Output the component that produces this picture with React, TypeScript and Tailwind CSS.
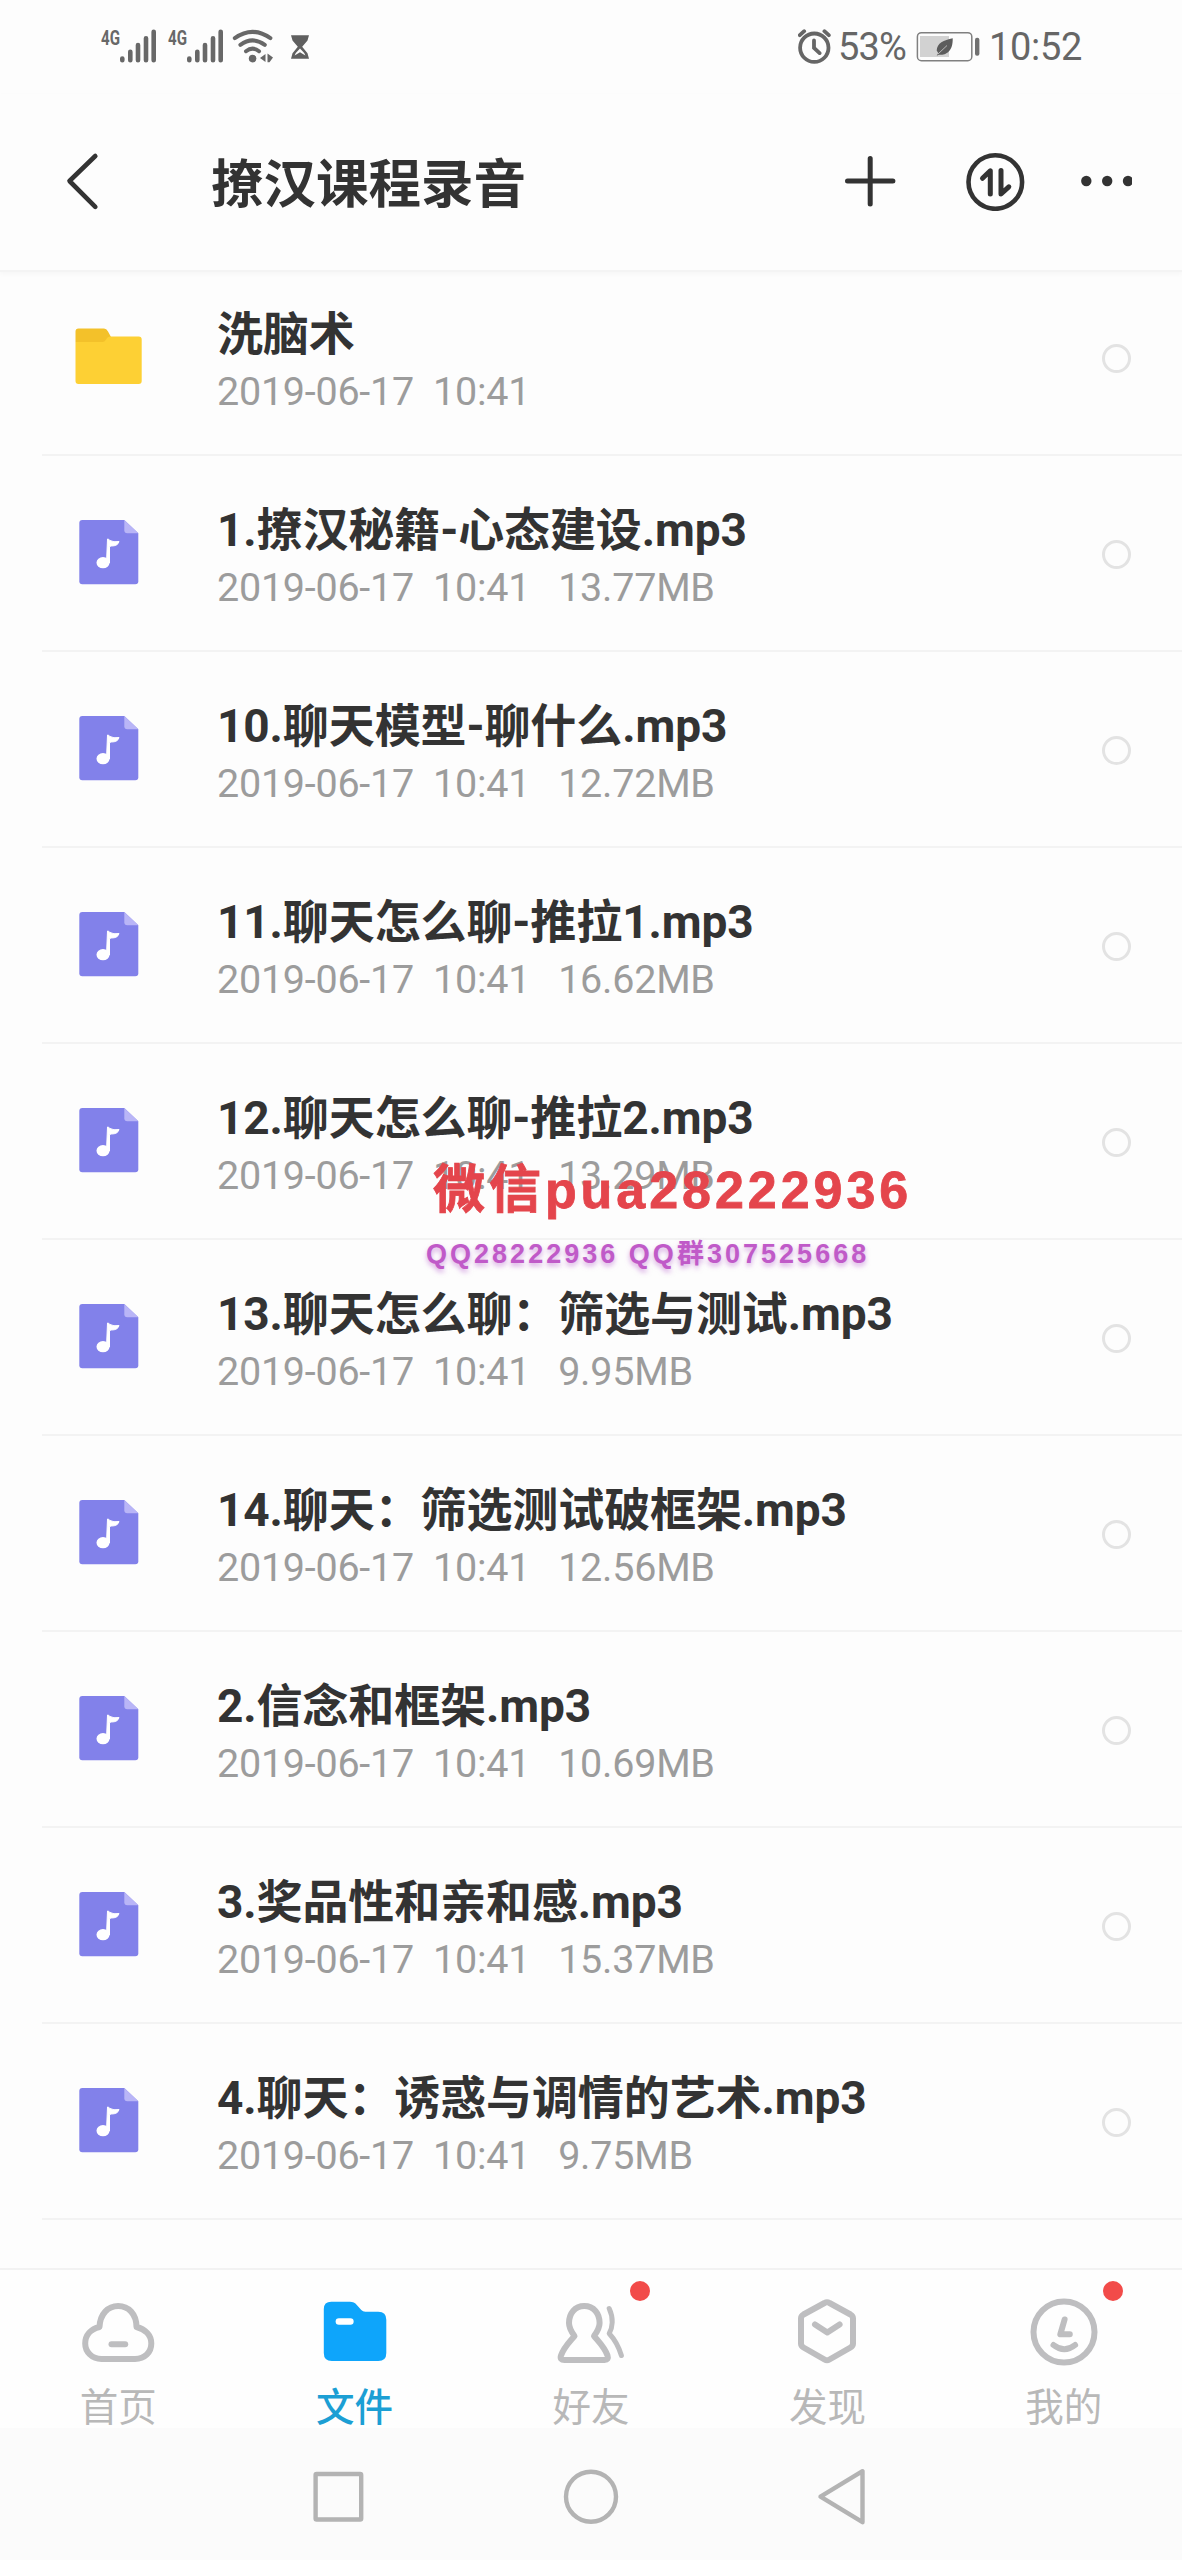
import { ReactNode } from 'react'

interface FileItem {
  name: string
  size?: string
  folder?: boolean
}

const files: FileItem[] = [
  { name: '洗脑术', folder: true },
  { name: '1.撩汉秘籍-心态建设.mp3', size: '13.77MB' },
  { name: '10.聊天模型-聊什么.mp3', size: '12.72MB' },
  { name: '11.聊天怎么聊-推拉1.mp3', size: '16.62MB' },
  { name: '12.聊天怎么聊-推拉2.mp3', size: '13.29MB' },
  { name: '13.聊天怎么聊：筛选与测试.mp3', size: '9.95MB' },
  { name: '14.聊天：筛选测试破框架.mp3', size: '12.56MB' },
  { name: '2.信念和框架.mp3', size: '10.69MB' },
  { name: '3.奖品性和亲和感.mp3', size: '15.37MB' },
  { name: '4.聊天：诱惑与调情的艺术.mp3', size: '9.75MB' },
]

function SignalBars() {
  return (
    <svg className="-mt-2" width="58" height="44" viewBox="99 20 58 44" fill="none" stroke="#686868" strokeWidth="4.6" strokeLinecap="round">
      <text x="101" y="44.5" fontSize="20.5" fontWeight="700" fontFamily="Roboto, sans-serif" fill="#686868" stroke="none" textLength="19" lengthAdjust="spacingAndGlyphs">
        4G
      </text>
      <path d="M122.3 58.6v1.6M130.3 51.8v8.4M138 45v15.2M146 38.2v22M153.7 31.8v28.4" />
    </svg>
  )
}

function StatusBar() {
  return (
    <div className="flex h-[94px] items-start justify-between pl-[99px] pr-[100px] pt-7 font-[Roboto,sans-serif] text-[38px] leading-9 text-[#666]">
      <div className="flex items-start">
        <SignalBars />
        <div className="ml-[9px] flex">
          <SignalBars />
        </div>
        <svg className="ml-2" width="78" height="36" viewBox="232 28 78 36" fill="none" stroke="#686868" strokeWidth="4" strokeLinecap="round">
          <path d="M234.8 38.2Q252.6 25.5 270.4 38.2" />
          <path d="M240.4 44.8Q252.6 36 264.8 44.8" />
          <path d="M246 51.2Q252.6 46 259 51.2" />
          <circle cx="252.6" cy="58.6" r="3.8" fill="#686868" stroke="none" />
          <path d="M265.5 54v8l-5.5-4zM267.5 53.5l5.5 4-3.5 4.7h-2z" fill="#686868" stroke="none" />
          <path d="M291 35.3h18l-1.5 5.2-5.3 6.2 5.3 6.6 1.5 5.4h-18l1.5-5.4 5.3-6.6-5.3-6.2z" fill="#606060" stroke="none" />
          <path d="M294.6 55.6l1.2-2.6 4.2-4.6 4.2 4.6 1.2 2.6-5.4-3.4z" fill="#fdfdfd" stroke="none" />
        </svg>
      </div>
      <div className="flex items-start">
        <svg width="34" height="36" viewBox="798 28 34 36" fill="none" stroke="#666" strokeWidth="3.8" strokeLinecap="round">
          <circle cx="814.3" cy="47.7" r="14.2" />
          <path d="M814 40.5v7.4l5.6 5.2M799.8 35.2l4.4-4M824.4 31.2l4.4 4" />
        </svg>
        <span className="ml-[6px] mt-px w-[68px] tracking-[-0.8px]">53%</span>
        <svg className="ml-[10px]" width="64" height="36" viewBox="916 28 64 36" fill="none">
          <rect x="917.4" y="32.7" width="54.4" height="28" rx="4" stroke="#808080" strokeWidth="1.5" />
          <rect x="920" y="36" width="29" height="21" fill="#d2d2d2" />
          <path d="M952.7 38.2c-9 1.8-15.7 4.8-16 12.3l1.5 2.5-1.5 2.8 2-1c6 .6 14.5-2.3 14-16.6z" fill="#5c5c5c" />
          <path d="M938 54l9-8.5" stroke="#b8b8b8" strokeWidth="1" />
          <rect x="975" y="37.7" width="4.4" height="18" rx="2" fill="#707070" />
        </svg>
        <span className="ml-[9px] mt-px w-[93px] tracking-[-0.3px]">10:52</span>
      </div>
    </div>
  )
}

function Header() {
  return (
    <header className="flex h-[178px] items-center border-b-2 border-[#f4f4f4] shadow-[0_2px_5px_rgba(0,0,0,0.03)]">
      <svg className="mb-0.5 ml-[64px]" width="36" height="60" viewBox="64 151 36 60" fill="none" stroke="#333" strokeWidth="4.6" strokeLinecap="round" strokeLinejoin="round">
        <path d="M95.3 156L69.5 181l25.8 25.8" />
      </svg>
      <h1 className="ml-[111px] mt-1.5 flex-1 text-[52.5px] font-bold leading-[60px] text-[#333]">撩汉课程录音</h1>
      <svg className="mb-0.5 mr-[50px]" width="292" height="60" viewBox="840 151 292 60" fill="none" stroke="#333" strokeWidth="5" strokeLinecap="round" strokeLinejoin="round">
        <path d="M847.5 181h45.4M870.2 158.5v45.5" />
        <circle cx="995.3" cy="182" r="26.8" strokeWidth="4.6" />
        <path d="M982.5 178.3l7.8-7.5V194M1001 170.5V194l7.8-7.2" />
        <g fill="#333" stroke="none">
          <circle cx="1086.3" cy="181" r="5.2" />
          <circle cx="1107.2" cy="181" r="5.2" />
          <circle cx="1128" cy="181" r="5.2" />
        </g>
      </svg>
    </header>
  )
}

function FolderIcon() {
  return (
    <svg width="68" height="66" viewBox="75 324 68 66">
      <path d="M75.5 342v-10.5q0-3 3-3h25.5q2.5 0 4 3l3 5.5-6 8z" fill="#f3c12a" />
      <path d="M75.5 342h27q2 0 3.5-2.5 1.6-3 4-3h28.7q3 0 3 3v41.5q0 3-3 3h-60.2q-3 0-3-3z" fill="#fdd034" />
    </svg>
  )
}

function MusicIcon() {
  return (
    <svg width="68" height="66" viewBox="75 520 68 66">
      <path d="M82.3 520h42l14 13.3v48q0 3-3 3h-53q-3 0-3-3V523q0-3 3-3z" fill="#8281ea" />
      <path d="M124.3 520l14 13.3h-11q-3 0-3-3z" fill="#b9b5f7" />
      <ellipse cx="103" cy="562.7" rx="6.5" ry="5.6" fill="#fff" />
      <path d="M107.5 539q1.5 0 2.5 1.5 3.5 2 9 1-1 4.5-7.7 4.5l-1.8.5V563h-3z" fill="#fff" stroke="#fff" strokeWidth="1" strokeLinejoin="round" />
    </svg>
  )
}

function FileRow({ file }: { file: FileItem }) {
  return (
    <li className="flex h-[196px] shrink-0 pl-[42px]">
      <div className="flex flex-1 items-start border-b-2 border-[#f3f3f3]">
        <div className="ml-[33px] mt-[64px]">{file.folder ? <FolderIcon /> : <MusicIcon />}</div>
        <div className="ml-[74px] flex-1 whitespace-pre">
          <p className="mt-[46px] text-[46px] font-bold leading-[56px] tracking-[-0.1px] text-[#333]">{file.name}</p>
          <p className="mt-[7px] text-[39.5px] leading-[46px] tracking-[-0.25px] text-[#9c9c9c]">
            2019-06-17{'  '}10:41
            {file.size && <span className="ml-[28px]">{file.size}</span>}
          </p>
        </div>
        <span className="mr-[51px] mt-[84px] size-[29px] rounded-full border-[3px] border-[#e3e3e3]" />
      </div>
    </li>
  )
}

function Tab({ label, active, badge, children }: { label: string; active?: boolean; badge?: boolean; children: ReactNode }) {
  return (
    <div className="relative flex flex-1 flex-col items-center pt-[28px]">
      {children}
      <span className={active ? 'mt-[15px] text-[38.5px] font-medium leading-[50px] text-[#1c9fd4]' : 'mt-[15px] text-[38.5px] leading-[50px] text-[#b8b8b8]'}>
        {label}
      </span>
      {badge && <i className="absolute left-[157px] top-[11px] size-[20px] rounded-full bg-[#f24b49]" />}
    </div>
  )
}

const outline = {
  className: 'shrink-0',
  width: 76,
  height: 70,
  fill: 'none',
  stroke: '#bebec0',
  strokeWidth: 6,
  strokeLinecap: 'round',
  strokeLinejoin: 'round',
} as const

function TabBar() {
  return (
    <nav className="flex h-[160px] border-t-2 border-[#f2f2f2] bg-[#fefefe]">
      <Tab label="首页">
        <svg {...outline} viewBox="80 2298 76 70">
          <path d="M99.5 2327C100 2314 108 2306 118.2 2306S136.5 2314 136.5 2327C145 2329 151.3 2335 151.3 2343.5C151.3 2352 145 2359 135 2359H101.5C92 2359 85.2 2352 85.2 2343.5C85.2 2335 91 2329 99.5 2327Z" />
          <path d="M111.5 2344.3h13.7" />
        </svg>
      </Tab>
      <Tab label="文件" active>
        <svg {...outline} viewBox="316.6 2298 76 70" stroke="none">
          <path d="M323.4 2309q0-7.3 7.5-7.3h18.5q4.5 0 7 3.3l4.5 5q1.5 1.7 4 1.7h13q8 0 8 8v33.3q0 8-8 8h-46.5q-8 0-8-8z" fill="#0ea5fb" />
          <path d="M338.5 2321.5h11.5" stroke="#fff" strokeWidth="6.5" />
        </svg>
      </Tab>
      <Tab label="好友" badge>
        <svg {...outline} viewBox="553 2298 76 70">
          <path d="M584.3 2306c-9.5 0-15.3 7.5-15.3 17 0 5.5 2.5 9 5.5 13-5 6-10.5 11-13.5 19.5q-1.5 4.500 3.500 4.500h40q4.500 0 3-4.500c-3-8.500-8.500-13.500-13.500-19.500 3-4 5.600-7.500 5.600-13 0-9.500-5.800-17-15.300-17z" />
          <path d="M609.2 2308.5q3.3 7 3 14-.2 6-3 11 8.3 9 12.2 22" strokeWidth="5" />
        </svg>
      </Tab>
      <Tab label="发现">
        <svg {...outline} viewBox="789.5 2298 76 70">
          <path d="M825 2303q2.5-1.5 5 0l21 11.5q2.5 1.5 2.5 4v25q0 2.5-2.5 4l-21 12q-2.5 1.5-5 0l-21-12q-2.5-1.5-2.5-4v-25q0-2.5 2.5-4z" />
          <path d="M815.5 2324.5l12.3 8 12.3-8" />
        </svg>
      </Tab>
      <Tab label="我的" badge>
        <svg {...outline} viewBox="1026 2298 76 70">
          <circle cx="1064" cy="2332" r="30.5" />
          <path d="M1064.6 2319.5l-4.3 14.8h9.5M1053.5 2345q10.8 8.5 21.6 0" />
        </svg>
      </Tab>
    </nav>
  )
}

function SystemNav() {
  return (
    <div className="flex h-[132px] bg-[#fbfbfb] pl-[312px] pt-[39px]">
      <svg width="554" height="60" viewBox="312 2467 554 60" fill="none" stroke="#b3b3b3" strokeWidth="4.4" strokeLinejoin="round">
        <rect x="315.6" y="2474" width="45.6" height="45.5" rx="1" />
        <circle cx="591" cy="2496.7" r="25" />
        <path d="M820.5 2496.7l42-25.5v51z" />
      </svg>
    </div>
  )
}

export default function App() {
  return (
    <div className="relative flex h-[2560px] w-[1182px] flex-col overflow-hidden bg-[#fdfdfd] font-[Roboto,'Noto_Sans_CJK_SC',sans-serif]">
      <StatusBar />
      <Header />
      <ul className="-mt-[12px] flex h-[2008px] flex-col overflow-hidden">
        {files.map((file) => (
          <FileRow key={file.name} file={file} />
        ))}
      </ul>
      <TabBar />
      <SystemNav />

      {/* 水印 */}
      <div className="absolute left-[433px] top-[1158px] whitespace-nowrap font-['Liberation_Sans','Noto_Sans_CJK_SC',sans-serif] font-bold">
        <p className="text-[52px] leading-[64px] tracking-[3.95px] text-[#e4454c] [-webkit-text-stroke:0.8px_#e4454c]">微信pua28222936</p>
        <p className="-ml-[7px] mt-[14px] text-[27px] leading-9 tracking-[3.02px] text-[#c05ac8] [text-shadow:0_3px_5px_rgba(190,110,210,0.6)]">
          QQ28222936 QQ群307525668
        </p>
      </div>
    </div>
  )
}
